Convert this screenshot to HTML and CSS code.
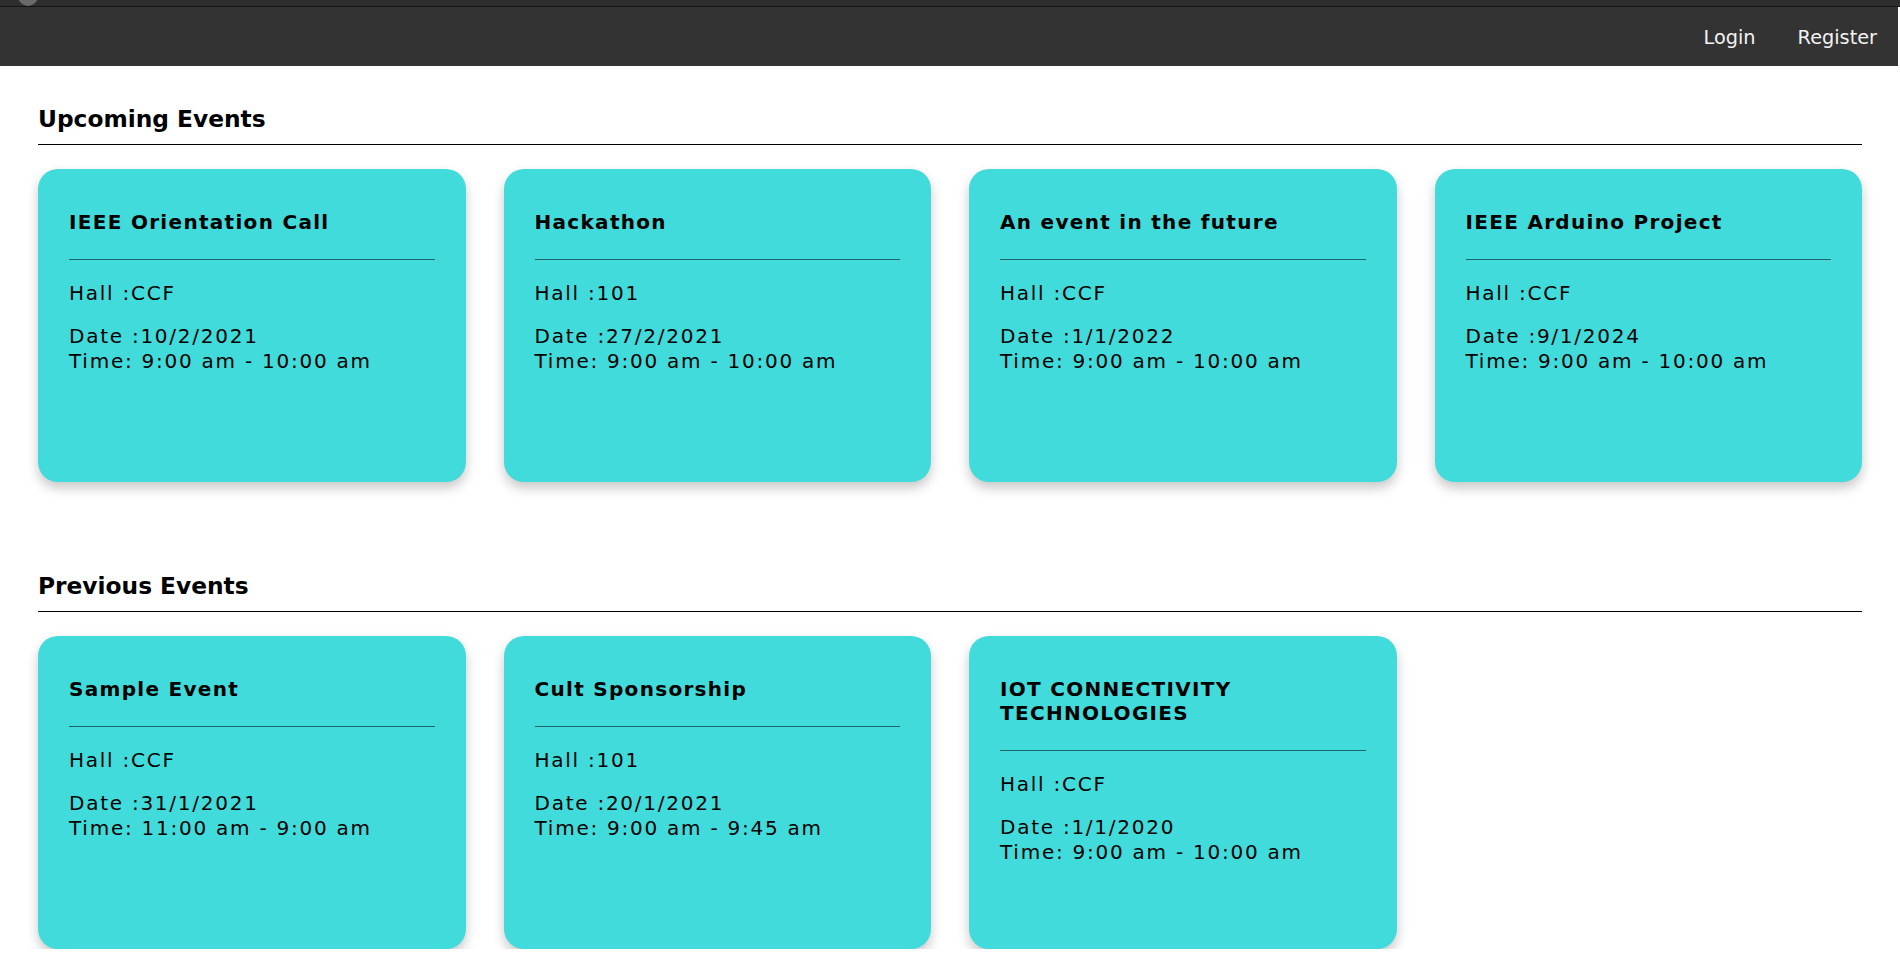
FILE: index.html
```html
<!DOCTYPE html>
<html lang="en">
<head>
    <meta charset="UTF-8">
    <meta name="viewport" content="width=device-width, initial-scale=1.0">
    <title>Events</title>
    <link rel="stylesheet" href="styles.css">
</head>
<body>
    <div class="chrome"></div>
    <nav class="topnav">
        <a href="#">Login</a>
        <a href="#">Register</a>
    </nav>

    <main>
        <section class="events">
            <h2>Upcoming Events</h2>
            <hr class="rule">
            <div class="cards">
                <div class="card">
                    <h3>IEEE Orientation Call</h3>
                    <hr>
                    <p>Hall :CCF</p>
                    <p>Date :10/2/2021<br>Time: 9:00 am - 10:00 am</p>
                </div>
                <div class="card">
                    <h3>Hackathon</h3>
                    <hr>
                    <p>Hall :101</p>
                    <p>Date :27/2/2021<br>Time: 9:00 am - 10:00 am</p>
                </div>
                <div class="card">
                    <h3>An event in the future</h3>
                    <hr>
                    <p>Hall :CCF</p>
                    <p>Date :1/1/2022<br>Time: 9:00 am - 10:00 am</p>
                </div>
                <div class="card">
                    <h3>IEEE Arduino Project</h3>
                    <hr>
                    <p>Hall :CCF</p>
                    <p>Date :9/1/2024<br>Time: 9:00 am - 10:00 am</p>
                </div>
            </div>
        </section>

        <section class="events">
            <h2>Previous Events</h2>
            <hr class="rule">
            <div class="cards">
                <div class="card">
                    <h3>Sample Event</h3>
                    <hr>
                    <p>Hall :CCF</p>
                    <p>Date :31/1/2021<br>Time: 11:00 am - 9:00 am</p>
                </div>
                <div class="card">
                    <h3>Cult Sponsorship</h3>
                    <hr>
                    <p>Hall :101</p>
                    <p>Date :20/1/2021<br>Time: 9:00 am - 9:45 am</p>
                </div>
                <div class="card">
                    <h3>IOT CONNECTIVITY TECHNOLOGIES</h3>
                    <hr>
                    <p>Hall :CCF</p>
                    <p>Date :1/1/2020<br>Time: 9:00 am - 10:00 am</p>
                </div>
            </div>
        </section>
    </main>
</body>
</html>
```

FILE: styles.css
```css
body{
    margin: 0;
    background: #fff;
    font-family: "DejaVu Sans", Verdana, sans-serif;
    color: #000;
}

.chrome{
    height: 6px;
    background: #2e2e2e;
    border-bottom: 1px solid #151515;
    position: relative;
    overflow: hidden;
}
.chrome::before{
    content: "";
    position: absolute;
    left: 18px;
    top: -14px;
    width: 20px;
    height: 20px;
    border-radius: 50%;
    background: #6a6a6a;
}

.topnav{
    display: flex;
    justify-content: flex-end;
    height: 59px;
    background: #333;
    margin-right: 2px;
}
.topnav a{
    color: #f2f2f2;
    text-decoration: none;
    font-size: 19.3px;
    line-height: 61px;
    padding: 0 21px;
}

main{
    padding: 0 38px;
}

.events + .events{
    margin-top: 89px;
}

.events h2{
    font-size: 23.3px;
    line-height: 30px;
    margin: 38px 0 0;
}

.rule{
    border: none;
    border-top: 1px solid #000;
    margin: 10px 0 24px;
}

.cards{
    display: grid;
    grid-template-columns: repeat(4, 1fr);
    column-gap: 38px;
}

.card{
    background: #41dbdb;
    border-radius: 20px;
    height: 313px;
    box-sizing: border-box;
    padding: 41px 31px 0;
    box-shadow: 0 6px 12px rgba(0,0,0,0.22);
}
.card h3{
    font-size: 20px;
    letter-spacing: 1.3px;
    margin: 0;
}
.card hr{
    border: none;
    border-top: 1px solid rgba(0,0,0,0.55);
    margin: 25px 0 21px;
}
.card p{
    font-size: 20px;
    line-height: 25px;
    letter-spacing: 1.75px;
    margin: 0 0 18px;
}
```
